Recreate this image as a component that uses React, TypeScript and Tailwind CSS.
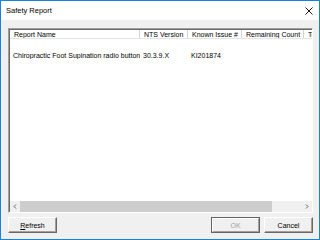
const columns = [
  { label: 'Report Name', width: 'w-[130px]' },
  { label: 'NTS Version', width: 'w-[48px]' },
  { label: 'Known Issue #', width: 'w-[54px]' },
  { label: 'Remaining Count', width: 'w-[62px]' },
  { label: 'Total', width: 'w-[40px]' },
];

const rows = [
  ['Chiropractic Foot Supination radio button', '30.3.9.X', 'KI201874', '', ''],
];

function ClassicButton({ children, disabled, isDefault }: { children: React.ReactNode; disabled?: boolean; isDefault?: boolean }) {
  return (
    <div className={`w-[49px] h-[16px] ${isDefault ? 'border border-[#646464]' : ''}`}>
      <div
        className={`w-full h-full flex items-center justify-center border bg-[#f0f0f0] ${
          disabled
            ? 'border-t-white border-l-white border-b-[#a0a0a0] border-r-[#a0a0a0] text-[#a0a0a0]'
            : 'border-t-white border-l-white border-b-[#696969] border-r-[#696969] text-black shadow-[inset_-1px_-1px_0_#a0a0a0]'
        }`}
      >
        {children}
      </div>
    </div>
  );
}

export default function App() {
  return (
    <div
      className="w-[320px] h-[240px] border border-[#1883d7] flex flex-col text-[7px] leading-none text-black"
      style={{ fontFamily: '"Liberation Sans", Arial, sans-serif' }}
    >
      {/* title bar */}
      <div className="h-[19px] bg-white flex items-center justify-between pl-[5px] pr-[5px]">
        <span className="text-[7.5px]">Safety Report</span>
        <svg width="8" height="8" viewBox="0 0 8 8" className="mr-[1px]">
          <path d="M0.5 0.5 L7.5 7.5 M7.5 0.5 L0.5 7.5" stroke="#000" strokeWidth="0.9" />
        </svg>
      </div>

      <div className="flex-1 bg-[#f0f0f0] flex flex-col pl-[7px] pr-[6px] pt-[8px] pb-[6px]">
        {/* list view */}
        <div className="flex-1 flex flex-col bg-white border border-t-[#a0a0a0] border-l-[#a0a0a0] border-b-white border-r-white shadow-[inset_1px_1px_0_#696969] overflow-hidden">
          <div className="flex h-[9px] shrink-0 border-b border-[#e5e5e5] mt-[1px] ml-[1px] overflow-hidden">
            {columns.map((c) => (
              <div
                key={c.label}
                className={`${c.width} shrink-0 pl-[4px] flex items-center border-r border-[#d5d5d5] whitespace-nowrap overflow-hidden`}
              >
                {c.label}
              </div>
            ))}
          </div>
          <div className="flex-1 pt-[12px] ml-[1px] overflow-hidden">
            {rows.map((r, i) => (
              <div key={i} className="flex h-[9px] items-center">
                {r.map((cell, j) => (
                  <div
                    key={j}
                    className={`${columns[j].width} shrink-0 pl-[3px] whitespace-nowrap overflow-hidden`}
                  >
                    {cell}
                  </div>
                ))}
              </div>
            ))}
          </div>
          {/* horizontal scrollbar */}
          <div className="h-[11px] shrink-0 ml-[1px] flex items-center bg-[#f0f0f0]">
            <div className="w-[10px] h-full flex items-center justify-center">
              <svg width="4" height="5" viewBox="0 0 4 5">
                <path d="M3 0.5 L1 2.5 L3 4.5" stroke="#606060" strokeWidth="1" fill="none" />
              </svg>
            </div>
            <div className="flex-1 h-full flex">
              <div className="w-[252px] h-full bg-[#cdcdcd]" />
            </div>
            <div className="w-[10px] h-full flex items-center justify-center">
              <svg width="4" height="5" viewBox="0 0 4 5">
                <path d="M1 0.5 L3 2.5 L1 4.5" stroke="#606060" strokeWidth="1" fill="none" />
              </svg>
            </div>
          </div>
        </div>

        {/* buttons */}
        <div className="flex items-center mt-[4px] h-[16px]">
          <ClassicButton>
            <span>
              <span className="underline">R</span>efresh
            </span>
          </ClassicButton>
          <div className="flex-1" />
          <ClassicButton disabled isDefault>
            OK
          </ClassicButton>
          <div className="w-[4px]" />
          <ClassicButton>Cancel</ClassicButton>
        </div>
      </div>
    </div>
  );
}
